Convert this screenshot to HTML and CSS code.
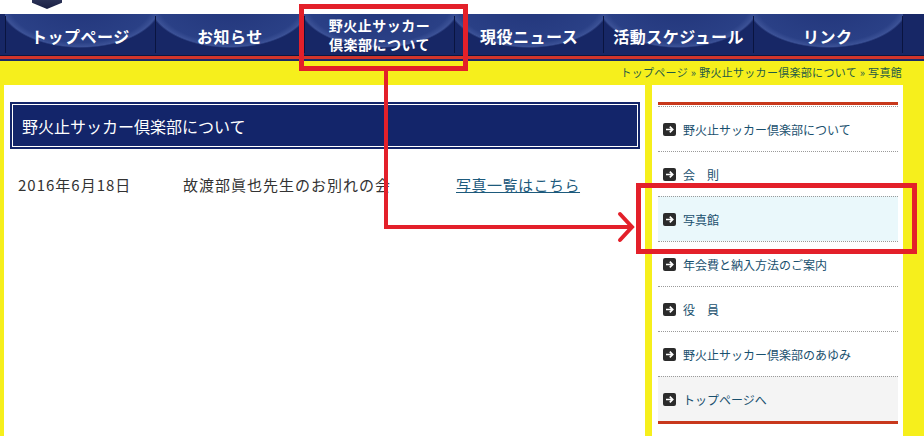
FILE: index.html
```html
<!DOCTYPE html>
<html lang="ja">
<head>
    <meta charset="UTF-8">
    <meta name="viewport" content="width=device-width, initial-scale=1.0">
    <title>野火止サッカー倶楽部について | 写真館</title>
    <link rel="stylesheet" href="styles.css">
</head>
<body>
    <div class="top">
        <div class="logo"></div>
    </div>

    <nav class="gnav">
        <a href="#">トップページ</a>
        <a href="#">お知らせ</a>
        <a href="#" class="two">野火止サッカー<br>倶楽部について</a>
        <a href="#">現役ニュース</a>
        <a href="#">活動スケジュール</a>
        <a href="#">リンク</a>
    </nav>
    <div class="nav-rule"></div>

    <div class="crumb">
        <a href="#">トップページ</a> » <a href="#">野火止サッカー倶楽部について</a> » 写真館
    </div>

    <div class="wrap">
        <main class="main">
            <h2 class="ttl">野火止サッカー倶楽部について</h2>
            <p class="event">
                <span class="date">2016年6月18日</span><span class="name">故渡部眞也先生のお別れの会</span><a href="#" class="more">写真一覧はこちら</a>
            </p>
        </main>

        <aside class="side">
            <ul class="snav">
                <li><a href="#"><svg class="ico" viewBox="0 0 13 13"><rect width="13" height="13" rx="2"/><path d="M3 6.5h6.5M6.8 3.6l2.9 2.9-2.9 2.9"/></svg>野火止サッカー倶楽部について</a></li>
                <li><a href="#"><svg class="ico" viewBox="0 0 13 13"><rect width="13" height="13" rx="2"/><path d="M3 6.5h6.5M6.8 3.6l2.9 2.9-2.9 2.9"/></svg>会　則</a></li>
                <li class="current"><a href="#"><svg class="ico" viewBox="0 0 13 13"><rect width="13" height="13" rx="2"/><path d="M3 6.5h6.5M6.8 3.6l2.9 2.9-2.9 2.9"/></svg>写真館</a></li>
                <li><a href="#"><svg class="ico" viewBox="0 0 13 13"><rect width="13" height="13" rx="2"/><path d="M3 6.5h6.5M6.8 3.6l2.9 2.9-2.9 2.9"/></svg>年会費と納入方法のご案内</a></li>
                <li><a href="#"><svg class="ico" viewBox="0 0 13 13"><rect width="13" height="13" rx="2"/><path d="M3 6.5h6.5M6.8 3.6l2.9 2.9-2.9 2.9"/></svg>役　員</a></li>
                <li><a href="#"><svg class="ico" viewBox="0 0 13 13"><rect width="13" height="13" rx="2"/><path d="M3 6.5h6.5M6.8 3.6l2.9 2.9-2.9 2.9"/></svg>野火止サッカー倶楽部のあゆみ</a></li>
                <li class="home"><a href="#"><svg class="ico" viewBox="0 0 13 13"><rect width="13" height="13" rx="2"/><path d="M3 6.5h6.5M6.8 3.6l2.9 2.9-2.9 2.9"/></svg>トップページへ</a></li>
            </ul>
        </aside>
    </div>

    <!-- annotation marks drawn over the page -->
    <svg class="marks" viewBox="0 0 924 436">
        <rect x="301.5" y="6.5" width="164" height="62"/>
        <path d="M386 70V227H630"/>
        <path d="M620 214l12 13-12 13"/>
        <rect x="638.5" y="185.5" width="276" height="66"/>
    </svg>
</body>
</html>
```

FILE: styles.css
```css
html, body {
    margin: 0;
    overflow: hidden;
}

body {
    position: relative;
    font-family: "Noto Sans CJK JP", "Noto Sans", sans-serif;
    background-color: #f6ef1c;
    color: #333;
}

a {
    color: inherit;
    text-decoration: none;
}

.top {
    height: 14px;
    background-color: #fff;
}

.logo {
    margin-left: 32px;
    width: 30px;
    height: 9px;
    background: linear-gradient(#2a3155, #1a2044);
    clip-path: polygon(0 0, 100% 0, 100% 30%, 50% 100%, 0 30%);
}

/* global nav */
.gnav {
    display: flex;
    height: 41px;
    padding-left: 5px;
    background-color: #172766;
}

.gnav a {
    display: flex;
    align-items: center;
    justify-content: center;
    width: 149.6px;
    flex: none;
    padding-top: 3px;
    box-sizing: border-box;
    color: #fff;
    font-size: 16px;
    font-weight: bold;
    letter-spacing: 0.5px;
    border-left: 1px solid #081238;
    border-image: linear-gradient(transparent 8%, #0a1440 8%, #0a1440 92%, transparent 92%) 1;
    background: radial-gradient(ellipse 82px 46px at 50% -12px, #22357a 0, #2a4086 88%, #3b5196 97%, transparent 100%);
}

.gnav a:last-child {
    border-right: 1px solid #081238;
}

.gnav a.two {
    font-size: 14px;
    line-height: 19px;
    text-align: center;
    padding-top: 1px;
}

.nav-rule {
    height: 6px;
    background: linear-gradient(#0c173f 0, #0c173f 1px, #d2352b 1px, #d2352b 4px, #1a2a68 4px);
}

.crumb {
    height: 24px;
    line-height: 22px;
    padding-right: 22px;
    text-align: right;
    font-size: 11px;
    letter-spacing: 0.3px;
    color: #1f5a46;
}

/* columns */
.wrap {
    display: flex;
    gap: 7px;
    padding-left: 4px;
}

.main {
    width: 641px;
    min-height: 351px;
    padding: 17px 5px 0 6px;
    box-sizing: border-box;
    background-color: #fff;
}

.ttl {
    margin: 0;
    height: 47px;
    padding-left: 10px;
    display: flex;
    align-items: center;
    box-sizing: border-box;
    font-size: 16px;
    font-weight: normal;
    color: #fff;
    background-color: #13256a;
    border: 2px solid #13256a;
    box-shadow: inset 0 0 0 1px #fff;
}

.event {
    margin: 25px 0 0 8px;
    font-size: 15px;
    line-height: 22px;
    letter-spacing: 1px;
    color: #333;
}

.date {
    display: inline-block;
    width: 165px;
}

.name {
    display: inline-block;
    width: 273px;
}

.more {
    color: #1d5a7c;
    text-decoration: underline;
    letter-spacing: 0.5px;
}

/* side nav */
.side {
    width: 251px;
    min-height: 351px;
    padding: 17px 5px 0 6px;
    box-sizing: border-box;
    background-color: #fff;
}

.snav {
    list-style: none;
    margin: 0;
    padding: 1px 0 0;
    border-top: 3px solid #c8381c;
    border-bottom: 3px solid #c8381c;
}

.snav li {
    height: 45px;
    border-top: 1px dotted #9a9a9a;
    box-sizing: border-box;
}

.snav li.current {
    background-color: #eaf8fb;
}

.snav li.home {
    background-color: #f4f4f4;
}

.snav a {
    display: flex;
    align-items: center;
    gap: 7px;
    height: 100%;
    padding-left: 5px;
    font-size: 12px;
    color: #19506e;
}

.ico {
    width: 13px;
    height: 13px;
    flex: none;
}

.ico rect {
    fill: #2b2b2b;
}

.ico path {
    fill: none;
    stroke: #fff;
    stroke-width: 1.7;
}

/* red annotation overlay */
.marks {
    position: absolute;
    top: 0;
    left: 0;
    width: 924px;
    height: 436px;
    pointer-events: none;
}

.marks rect,
.marks path {
    fill: none;
    stroke: #e3202a;
}

.marks rect {
    stroke-width: 5;
}

.marks path {
    stroke-width: 4;
    stroke-linecap: round;
    stroke-linejoin: miter;
}
```
